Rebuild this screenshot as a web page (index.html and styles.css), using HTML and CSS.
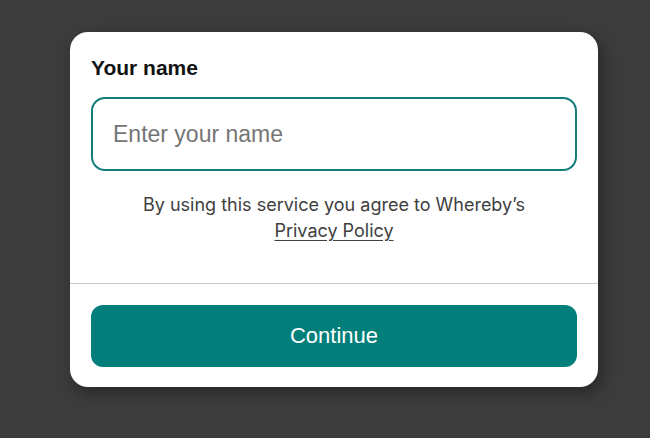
FILE: index.html
```html
<!DOCTYPE html>
<html>
<head>
<meta charset="utf-8">
<link rel="stylesheet" href="styles.css">
</head>
<body>
<div class="page">
  <div class="card">
    <div class="card-top">
      <label class="label" for="name">Your name</label>
      <input class="input" id="name" type="text" placeholder="Enter your name">
      <p class="terms">By using this service you agree to Whereby’s<br><a class="link" href="#">Privacy Policy</a></p>
    </div>
    <div class="card-bottom">
      <button class="btn">Continue</button>
    </div>
  </div>
</div>
</body>
</html>
```
FILE: styles.css
```css
html, body {
  margin: 0;
  padding: 0;
  background: #3c3c3c;
  height: 100%;
}
.page {
  padding: 32px 0 0 70px;
}
.card {
  width: 528px;
  background: #fff;
  border-radius: 18px;
  box-shadow: 4px 6px 16px rgba(0,0,0,0.35);
  overflow: hidden;
}
.card-top {
  padding: 24px 21px 0 21px;
  display: flex;
  flex-direction: column;
  border-bottom: 1px solid #c8c8c8;
}
.label {
  font-family: "Liberation Sans", Arial, sans-serif;
  font-size: 21px;
  line-height: 24px;
  font-weight: 600;
  color: #111;
  margin-bottom: 17px;
}
.input {
  box-sizing: border-box;
  height: 74px;
  width: 486px;
  border: 2px solid #117c79;
  border-radius: 14px;
  padding: 0 20px;
  font-family: "Liberation Sans", Arial, sans-serif;
  font-size: 23px;
  color: #222;
  outline: none;
}
.input::placeholder {
  color: #757575;
}
.terms {
  margin: 21px 0 39px 0;
  text-align: center;
  font-family: Inter, sans-serif;
  font-size: 18px;
  line-height: 26px;
  color: #404040;
}
.link {
  color: #404040;
  text-decoration: underline;
  text-underline-offset: 3px;
}
.card-bottom {
  padding: 21px 21px 20px 21px;
}
.btn {
  display: block;
  width: 486px;
  height: 62px;
  border: none;
  border-radius: 12px;
  background: #027f7b;
  color: #fff;
  font-family: "Liberation Sans", Arial, sans-serif;
  font-size: 22px;
  cursor: pointer;
}
```
